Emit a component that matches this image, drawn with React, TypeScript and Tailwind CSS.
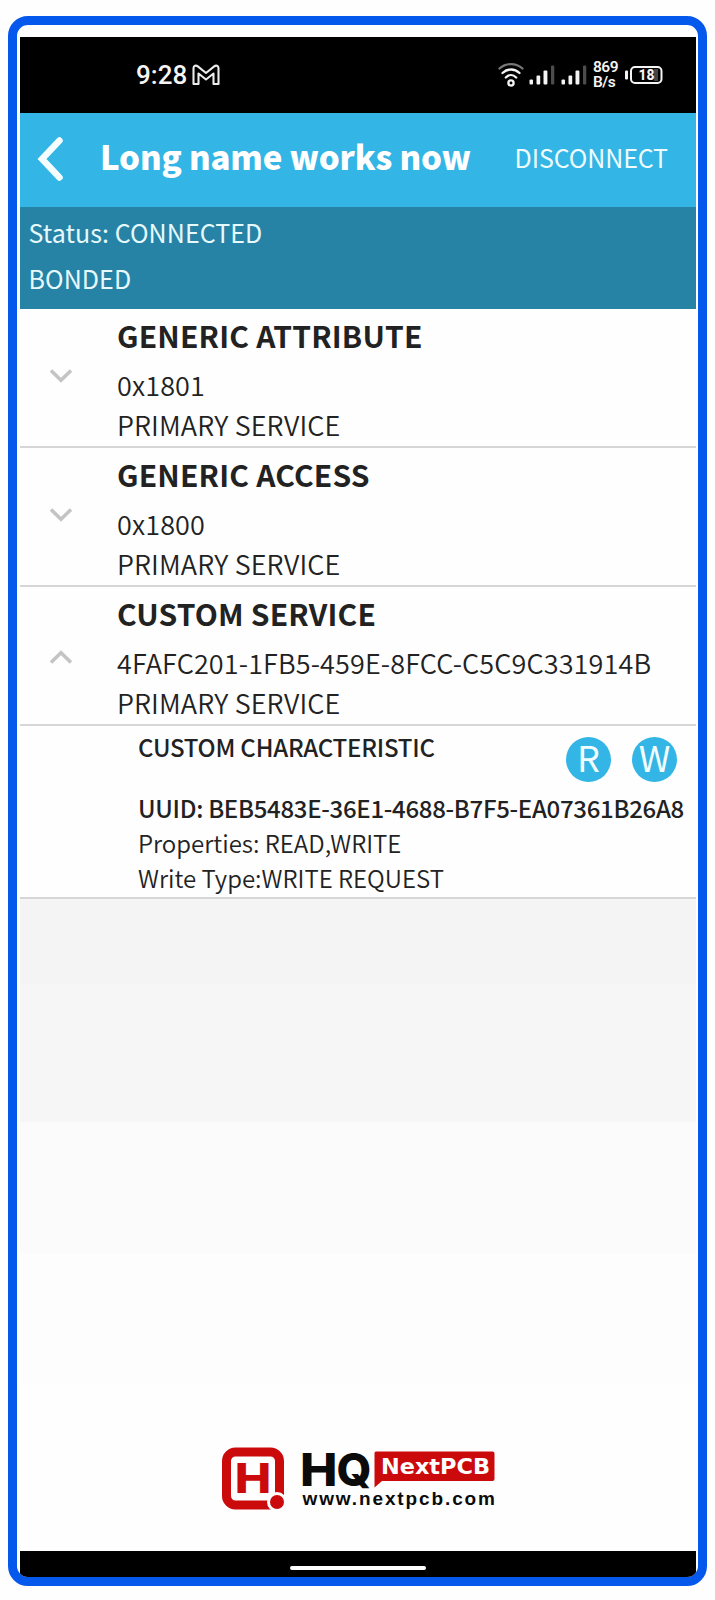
import type { ReactNode } from "react";

const services = [
    { name: "GENERIC ATTRIBUTE", uuid: "0x1801", open: false },
    { name: "GENERIC ACCESS", uuid: "0x1800", open: false },
    { name: "CUSTOM SERVICE", uuid: "4FAFC201-1FB5-459E-8FCC-C5C9C331914B", open: true },
];

function GmailIcon() {
    return (
        <svg className="-mt-px ml-[5px] h-[22px] w-[28px]" viewBox="0 0 28 22" fill="none" stroke="#ececec" strokeWidth="2.1" strokeLinejoin="round">
            <path d="M1.500 20V4.200C1.500 1.600 4 .9 5.800 2.400L14 9l8.200-6.600C24 .9 26.500 1.600 26.500 4.200V20H21.500V9.500L14 15.500 6.500 9.500V20Z" />
        </svg>
    );
}

function WifiIcon() {
    return (
        <svg className="h-[26px] w-[26px]" viewBox="0 0 26 26" fill="none" stroke="#f4f4f4" strokeWidth="2.300" strokeLinecap="round">
            <path d="M1.500 6.500C8 .6 18 .6 24.500 6.500" stroke="#777" />
            <path d="M4.500 11C9.500 6.300 16.500 6.300 21.500 11" />
            <path d="M7.800 15.500C11 12.300 15 12.300 18.200 15.500" />
            <circle cx="13" cy="21" r="2.600" />
        </svg>
    );
}

function SignalIcon() {
    return (
        <svg className="h-[20px] w-[26px]" viewBox="0 0 26 20">
            <rect x="0.500" y="14.500" width="3.500" height="5" rx="1" fill="#f4f4f4" />
            <rect x="7.500" y="10.500" width="3.700" height="9" rx="1" fill="#f4f4f4" />
            <rect x="14.500" y="5.500" width="3.900" height="14" rx="1" fill="#f4f4f4" />
            <rect x="22" y="0.500" width="3.300" height="19" rx="1" fill="#4c4c4c" />
        </svg>
    );
}

function BatteryIcon() {
    return (
        <svg className="h-[20px] w-[38px]" viewBox="0 0 38 20">
            <rect x="0" y="5.500" width="3" height="9" rx="1" fill="#f4f4f4" />
            <rect x="29" y="4" width="4" height="12" fill="#444" />
            <rect x="6" y="2" width="30.500" height="16" rx="4" fill="none" stroke="#f4f4f4" strokeWidth="2" />
            <text x="13.500" y="15.400" fill="#f4f4f4" fontFamily="Roboto, sans-serif" fontWeight="800" fontSize="15.500" textLength="16" lengthAdjust="spacingAndGlyphs">18</text>
        </svg>
    );
}

function Chevron({ open }: { open: boolean }) {
    return (
        <svg className={open ? "mt-[2px] h-[14px] w-[24px] rotate-180" : "-mt-[2px] h-[14px] w-[24px]"} viewBox="0 0 24 14" fill="none" stroke="#c4c4c4" strokeWidth="3.600">
            <path d="M2 1.500 12 11.300 22 1.500" />
        </svg>
    );
}

function RoundButton({ children }: { children: ReactNode }) {
    return (
        <button className="flex size-[45px] items-center justify-center rounded-full bg-[#33b5e5] text-[36px] leading-[40px] text-[#f2fdff]">
            <span className="-mt-[7px]">{children}</span>
        </button>
    );
}

function BrandLogo() {
    return (
        <svg className="h-[66px] w-[276px] overflow-visible" viewBox="0 0 276 66">
            <rect x="5.500" y="6" width="53" height="53" rx="9" fill="none" stroke="#cb0a0c" strokeWidth="9" />
            <circle cx="56" cy="56" r="10" fill="#fefefe" />
            <circle cx="56" cy="56" r="7" fill="#cb0a0c" />
            <text x="13.800" y="47" fill="#cb0a0c" fontFamily="Inter, sans-serif" fontWeight="800" fontSize="41.500" textLength="36.500" lengthAdjust="spacingAndGlyphs">H</text>
            <text x="79" y="40.300" fill="#0b0b0b" fontFamily="Inter, sans-serif" fontWeight="800" fontSize="45.500" textLength="37.500" lengthAdjust="spacingAndGlyphs">H</text>
            <text x="115.500" y="40.300" fill="#0b0b0b" fontFamily="Inter, sans-serif" fontWeight="800" fontSize="45.500" textLength="35" lengthAdjust="spacingAndGlyphs">Q</text>
            <path d="M155 5.500H271.500Q273.500 5.500 273.500 7.500V33Q273.500 35 271.500 35H161L153.500 41.500V7Q153.500 5.500 155 5.500Z" fill="#cb0a0c" />
            <text x="160" y="28.300" fill="#fff" fontFamily="DejaVu Sans, sans-serif" fontWeight="700" fontSize="21.500" textLength="109" lengthAdjust="spacingAndGlyphs">NextPCB</text>
            <text x="81.500" y="59.300" fill="#0b0b0b" fontFamily="Liberation Sans, sans-serif" fontWeight="700" fontSize="19" textLength="192.500">www.nextpcb.com</text>
        </svg>
    );
}

export default function App() {
    return (
        <main className="h-[1600px] w-[715px] bg-[#fefefe] px-2 pt-4 font-['Noto_Sans_CJK_SC',sans-serif]">
            <div className="flex h-[1570px] w-[699px] flex-col overflow-hidden rounded-[20px] border-[9px] border-[#0558ec] bg-[#fefefe] pt-3 pr-[2px] pl-[3px]">
                {/* Phone status bar */}
                <div className="flex h-[76px] shrink-0 items-center bg-black pr-[33px] pl-[116px] font-[Roboto,sans-serif] text-[#f4f4f4]">
                    <span className="text-[26px] font-medium">9:28</span>
                    <GmailIcon />
                    <div className="ml-auto flex items-center">
                        <WifiIcon />
                        <div className="ml-[5px] flex gap-[6px]">
                            <SignalIcon />
                            <SignalIcon />
                        </div>
                        <div className="mx-[6px] w-[26px] text-[15.5px] leading-[15.5px] font-semibold tracking-[-0.5px]">
                            <div>869</div>
                            <div>B/s</div>
                        </div>
                        <BatteryIcon />
                    </div>
                </div>

                {/* Device header */}
                <header className="flex h-[94px] shrink-0 items-center bg-[#33b5e5] pr-7 pb-[6px] pl-4 text-white">
                    <svg className="mt-1 h-[44px] w-[28px]" viewBox="0 0 28 44" fill="none" stroke="#f5feff" strokeWidth="6.500" strokeLinecap="round">
                        <path d="M23.500 3.500 6 22 23.500 40.500" />
                    </svg>
                    <h1 className="-mt-[2px] ml-[36px] text-[33px] leading-[60px] font-black tracking-[-0.17px] whitespace-nowrap">Long name works now</h1>
                    <button className="ml-auto text-[25px] leading-[60px] tracking-[-0.1px] text-[#effcff]">DISCONNECT</button>
                </header>
                <div className="h-[101.5px] shrink-0 bg-[#2783a6] px-[8.5px] pt-[2px] text-[25px] leading-[46px] tracking-[0.08px] text-[#e6fafd]">
                    <p>Status: CONNECTED</p>
                    <p>BONDED</p>
                </div>

                {/* Services */}
                <ul className="shrink-0 text-[#222]">
                    {services.map((service) => (
                        <li key={service.name} className="flex h-[139.3px] border-b-2 border-[#d6d6d6]">
                            <div className="flex w-[97px] items-center pl-[28.5px]">
                                <Chevron open={service.open} />
                            </div>
                            <div className="whitespace-nowrap">
                                <h2 className="text-[30px] leading-[52px] font-bold tracking-[0.18px]">{service.name}</h2>
                                <div className="pt-1 text-[27px] leading-[40px] font-[350] tracking-[0.13px]">
                                    <p>{service.uuid}</p>
                                    <p>PRIMARY SERVICE</p>
                                </div>
                            </div>
                        </li>
                    ))}
                    <li className="h-[172.6px] border-b-2 border-[#d6d6d6] pt-[3px] pl-[118px] text-[24px] leading-[35px] whitespace-nowrap">
                        <div className="flex h-[61px] justify-between pr-[19px]">
                            <h3 className="font-medium tracking-[-0.22px]">CUSTOM CHARACTERISTIC</h3>
                            <div className="flex gap-[21px] pt-[8px]">
                                <RoundButton>R</RoundButton>
                                <RoundButton>W</RoundButton>
                            </div>
                        </div>
                        <p className="font-medium tracking-[-0.3px]">UUID: BEB5483E-36E1-4688-B7F5-EA07361B26A8</p>
                        <p className="font-[350]">Properties: READ,WRITE</p>
                        <p className="font-[350]">Write Type:WRITE REQUEST</p>
                    </li>
                </ul>

                {/* Empty list area fading down to the brand */}
                <div className="h-[85px] shrink-0 bg-[#f4f4f4]" />
                <div className="h-[138px] shrink-0 bg-[#f6f6f6]" />
                <div className="h-[131px] shrink-0 bg-[#fbfbfb]" />
                <div className="h-[132px] shrink-0 bg-[#fdfdfd]" />
                <div className="flex grow items-end pb-[39px] pl-[201px]">
                    <BrandLogo />
                </div>

                {/* Gesture bar */}
                <div className="flex h-[26px] shrink-0 items-center justify-center bg-black pt-2">
                    <div className="h-1 w-[136px] rounded-full bg-white" />
                </div>
            </div>
        </main>
    );
}
